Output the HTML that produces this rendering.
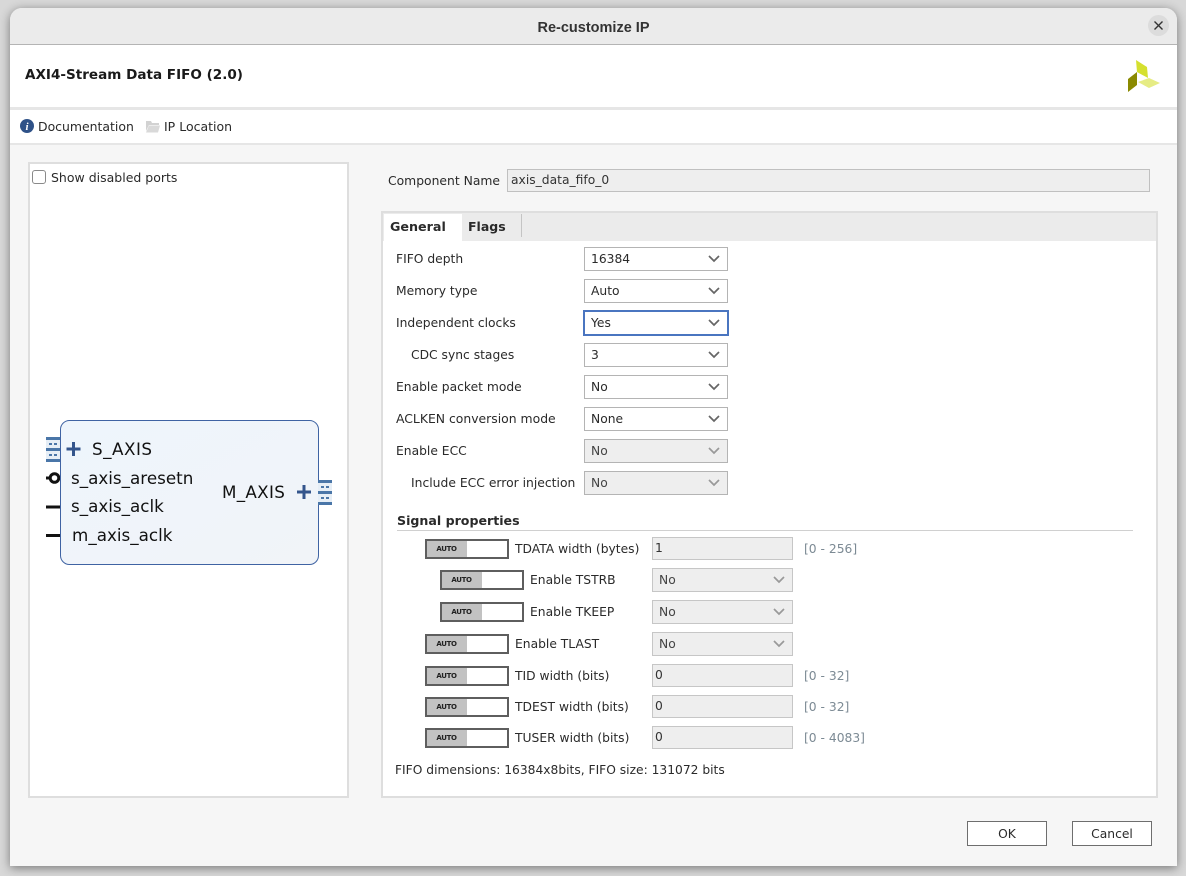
<!DOCTYPE html>
<html><head><meta charset="utf-8"><style>
html,body{margin:0;padding:0;width:1186px;height:876px;overflow:hidden;background:#fff;}
body{font-family:"DejaVu Sans",sans-serif;font-size:12.3px;color:#2a2a2a;position:relative;}
#shadow{position:absolute;left:0;top:0;width:1186px;height:876px;background:#d8d8d8;}
#win{position:absolute;left:10px;top:8px;width:1167px;height:858px;background:#f6f6f6;border-radius:12px 12px 0 0;box-shadow:0 2px 10px rgba(0,0,0,.45);overflow:hidden;}
.a{position:absolute;box-sizing:border-box;white-space:nowrap;}
.t{position:absolute;white-space:nowrap;line-height:16px;height:16px;}
.c{position:absolute;box-sizing:border-box;width:144px;height:24px;background:#fff;border:1px solid #b4b4b4;line-height:22px;padding-left:6px;}
.c.d{background:#eee;color:#444}
.c svg,.s svg{position:absolute;right:7px;top:7px}
.s{position:absolute;box-sizing:border-box;width:141px;height:24px;background:#eee;border:1px solid #c6c6c6;line-height:22px;padding-left:6px;color:#444}
.i{position:absolute;box-sizing:border-box;left:652px;width:141px;height:23px;background:#eee;border:1px solid #c6c6c6;line-height:21px;padding-left:2px;color:#333}
.au{position:absolute;box-sizing:border-box;width:84px;height:20px;background:#fff;border:2px solid #5e5e5e;}
.au b{position:absolute;left:0;top:0;width:40px;height:16px;background:#c2c2c2;font:bold 7px/16px "DejaVu Sans",sans-serif;color:#222;text-align:center;letter-spacing:-.35px;padding-right:1px;box-sizing:border-box}
.r{position:absolute;color:#7c8a94;white-space:nowrap;line-height:16px}
.p{position:absolute;white-space:nowrap;font-size:16.75px;line-height:20px;color:#111}
.btn{position:absolute;box-sizing:border-box;width:80px;height:25px;background:#fff;border:1px solid #6e6e6e;text-align:center;line-height:24px}
</style></head><body>
<div id="shadow"></div>
<div id="win"></div>
<div class="a" style="left:10px;top:8px;width:1167px;height:37px;background:#ebebeb;border-bottom:1px solid #b4b4b4;border-radius:12px 12px 0 0"></div>
<div class="t" style="left:10px;width:1167px;top:20px;text-align:center;font-family:'Liberation Sans',sans-serif;font-weight:bold;font-size:14.5px;color:#333">Re-customize IP</div>
<div class="a" style="left:1148px;top:15px;width:21px;height:21px;border-radius:50%;background:#dcdcdc"></div>
<svg class="a" style="left:1148px;top:15px" width="21" height="21"><path d="M6.500 6.500l8 8M14.500 6.500l-8 8" stroke="#333" stroke-width="1.400" fill="none"/></svg>

<div class="a" style="left:10px;top:45px;width:1167px;height:62px;background:#fff"></div>
<div class="t" style="left:25px;top:67px;font-weight:bold;font-size:13.55px;line-height:17px;color:#1a1a1a">AXI4-Stream Data FIFO (2.0)</div>
<svg class="a" style="left:1120px;top:55px" width="45" height="42"><polygon points="16,5 27,12 28,23 17,17" fill="#d5e02f"/><polygon points="17,17 8,24 8,37 17,30" fill="#8a8a00"/><polygon points="18,27 29,23 40,28 29,33" fill="#e6ec84"/></svg>

<div class="a" style="left:10px;top:107px;width:1167px;height:3px;background:#e6e6e6"></div>
<div class="a" style="left:10px;top:110px;width:1167px;height:33px;background:#fff"></div>
<div class="a" style="left:10px;top:143px;width:1167px;height:2px;background:#e6e6e6"></div>
<svg class="a" style="left:20px;top:119px" width="14" height="14"><circle cx="7" cy="7" r="7" fill="#2f5288"/><text x="7" y="11" text-anchor="middle" font-family="'Liberation Serif',serif" font-style="italic" font-weight="bold" font-size="11" fill="#fff">i</text></svg>
<div class="t" style="left:38px;top:119px;font-size:12.45px">Documentation</div>
<svg class="a" style="left:146px;top:120px" width="14" height="13"><path d="M0 1h5l1 2h7v2H3L0 11z" fill="#d2d2d2"/><path d="M3 5.500h11l-2 7H0z" fill="#d9d9d9"/></svg>
<div class="t" style="left:164px;top:119px;font-size:12.5px">IP Location</div>

<!-- left panel -->
<div class="a" style="left:28px;top:162px;width:321px;height:636px;background:#fff;border:2px solid #dedede"></div>
<div class="a" style="left:32px;top:170px;width:14px;height:14px;border:1px solid #8a8a8a;border-radius:3px;background:#fff"></div>
<div class="t" style="left:51px;top:170px;font-size:12.5px">Show disabled ports</div>

<svg class="a" style="left:40px;top:415px" width="300" height="160">
<defs><linearGradient id="g" x1="0" y1="0" x2="1" y2="1"><stop offset="0" stop-color="#eef5fc"/><stop offset="1" stop-color="#f1f4f8"/></linearGradient></defs>
<g fill="#e6eef6"><rect x="6" y="25" width="14" height="8"/><rect x="6" y="36" width="14" height="8"/></g>
<g fill="#4a76a8"><rect x="6" y="22" width="14" height="3"/><rect x="6" y="33" width="14" height="3"/><rect x="6" y="44" width="14" height="3"/>
<rect x="9" y="28" width="3" height="2"/><rect x="14" y="28" width="3" height="2"/><rect x="9" y="39" width="3" height="2"/><rect x="14" y="39" width="3" height="2"/></g>
<path d="M6 63h8" stroke="#111" stroke-width="3"/><circle cx="14.500" cy="63" r="4.300" fill="#fff" stroke="#111" stroke-width="3"/>
<path d="M6 92h14M6 120.500h14" stroke="#111" stroke-width="3" fill="none"/>
<rect x="20.500" y="5.500" width="258" height="144" rx="9" fill="url(#g)" stroke="#3f63a3" stroke-width="1"/>
<path d="M26.500 34h14M33.500 27v14" stroke="#34558c" stroke-width="3" fill="none"/>
<path d="M257 77h14M264 70v14" stroke="#34558c" stroke-width="3" fill="none"/>
<g fill="#e6eef6"><rect x="278" y="68" width="14" height="8"/><rect x="278" y="79" width="14" height="8"/></g>
<g fill="#4a76a8"><rect x="278" y="65" width="14" height="3"/><rect x="278" y="76" width="14" height="3"/><rect x="278" y="87" width="14" height="3"/>
<rect x="281" y="71" width="3" height="2"/><rect x="286" y="71" width="3" height="2"/><rect x="281" y="82" width="3" height="2"/><rect x="286" y="82" width="3" height="2"/></g>
</svg>
<div class="p" style="left:92px;top:439px;letter-spacing:.5px">S_AXIS</div>
<div class="p" style="left:71px;top:468px">s_axis_aresetn</div>
<div class="p" style="left:71px;top:496px">s_axis_aclk</div>
<div class="p" style="left:72px;top:525px">m_axis_aclk</div>
<div class="p" style="left:222px;top:482px;letter-spacing:.3px">M_AXIS</div>

<!-- component name -->
<div class="t" style="left:388px;top:173px;font-size:12.35px">Component Name</div>
<div class="a" style="left:507px;top:169px;width:643px;height:23px;background:#eee;border:1px solid #c0c0c0;line-height:21px;padding-left:3px;color:#333">axis_data_fifo_0</div>

<!-- right panel -->
<div class="a" style="left:381px;top:211px;width:777px;height:587px;background:#fff;border:2px solid #dedede"></div>
<div class="a" style="left:383px;top:213px;width:773px;height:28px;background:#ebebeb"></div>
<div class="a" style="left:384px;top:214px;width:78px;height:27px;background:#fff"></div>
<div class="a" style="left:521px;top:214px;width:1px;height:23px;background:#c4c4c4"></div>
<div class="t" style="left:390px;top:219px;font-weight:bold;font-size:12.7px">General</div>
<div class="t" style="left:468px;top:219px;font-weight:bold;font-size:12.5px">Flags</div>

<div class="t" style="left:396px;top:251px">FIFO depth</div>
<div class="c" style="left:584px;top:247px">16384<svg width="12" height="8"><path d="M1 1l5 5 5-5" fill="none" stroke="#666" stroke-width="1.700"/></svg></div>
<div class="t" style="left:396px;top:283px">Memory type</div>
<div class="c" style="left:584px;top:279px">Auto<svg width="12" height="8"><path d="M1 1l5 5 5-5" fill="none" stroke="#666" stroke-width="1.700"/></svg></div>
<div class="t" style="left:396px;top:315px">Independent clocks</div>
<div class="c" style="left:583px;top:310px;width:146px;height:26px;border:2px solid #4a75c0;padding-left:6px;line-height:22px">Yes<svg width="12" height="8"><path d="M1 1l5 5 5-5" fill="none" stroke="#666" stroke-width="1.700"/></svg></div>
<div class="t" style="left:411px;top:347px">CDC sync stages</div>
<div class="c" style="left:584px;top:343px">3<svg width="12" height="8"><path d="M1 1l5 5 5-5" fill="none" stroke="#666" stroke-width="1.700"/></svg></div>
<div class="t" style="left:396px;top:379px">Enable packet mode</div>
<div class="c" style="left:584px;top:375px">No<svg width="12" height="8"><path d="M1 1l5 5 5-5" fill="none" stroke="#666" stroke-width="1.700"/></svg></div>
<div class="t" style="left:396px;top:411px;font-size:12.4px">ACLKEN conversion mode</div>
<div class="c" style="left:584px;top:407px">None<svg width="12" height="8"><path d="M1 1l5 5 5-5" fill="none" stroke="#666" stroke-width="1.700"/></svg></div>
<div class="t" style="left:396px;top:443px">Enable ECC</div>
<div class="c d" style="left:584px;top:439px">No<svg width="12" height="8"><path d="M1 1l5 5 5-5" fill="none" stroke="#999" stroke-width="1.700"/></svg></div>
<div class="t" style="left:411px;top:475px;font-size:12.35px">Include ECC error injection</div>
<div class="c d" style="left:584px;top:471px">No<svg width="12" height="8"><path d="M1 1l5 5 5-5" fill="none" stroke="#999" stroke-width="1.700"/></svg></div>

<div class="t" style="left:397px;top:513px;font-weight:bold;font-size:12.6px">Signal properties</div>
<div class="a" style="left:397px;top:530px;width:736px;height:1px;background:#d0d0d0"></div>

<div class="au" style="left:425px;top:539px"><b>AUTO</b></div>
<div class="t" style="left:515px;top:541px">TDATA width (bytes)</div>
<div class="i" style="top:537px">1</div><div class="r" style="left:804px;top:541px">[0 - 256]</div>

<div class="au" style="left:440px;top:570px"><b>AUTO</b></div>
<div class="t" style="left:530px;top:572px">Enable TSTRB</div>
<div class="s" style="left:652px;top:568px">No<svg width="12" height="8"><path d="M1 1l5 5 5-5" fill="none" stroke="#999" stroke-width="1.700"/></svg></div>

<div class="au" style="left:440px;top:602px"><b>AUTO</b></div>
<div class="t" style="left:530px;top:604px">Enable TKEEP</div>
<div class="s" style="left:652px;top:600px">No<svg width="12" height="8"><path d="M1 1l5 5 5-5" fill="none" stroke="#999" stroke-width="1.700"/></svg></div>

<div class="au" style="left:425px;top:634px"><b>AUTO</b></div>
<div class="t" style="left:515px;top:636px">Enable TLAST</div>
<div class="s" style="left:652px;top:632px">No<svg width="12" height="8"><path d="M1 1l5 5 5-5" fill="none" stroke="#999" stroke-width="1.700"/></svg></div>

<div class="au" style="left:425px;top:666px"><b>AUTO</b></div>
<div class="t" style="left:515px;top:668px">TID width (bits)</div>
<div class="i" style="top:664px">0</div><div class="r" style="left:804px;top:668px">[0 - 32]</div>

<div class="au" style="left:425px;top:697px"><b>AUTO</b></div>
<div class="t" style="left:515px;top:699px">TDEST width (bits)</div>
<div class="i" style="top:695px">0</div><div class="r" style="left:804px;top:699px">[0 - 32]</div>

<div class="au" style="left:425px;top:728px"><b>AUTO</b></div>
<div class="t" style="left:515px;top:730px">TUSER width (bits)</div>
<div class="i" style="top:726px">0</div><div class="r" style="left:804px;top:730px">[0 - 4083]</div>

<div class="t" style="left:395px;top:762px;font-size:12.27px">FIFO dimensions: 16384x8bits, FIFO size: 131072 bits</div>

<div class="btn" style="left:967px;top:821px">OK</div>
<div class="btn" style="left:1072px;top:821px">Cancel</div>
</body></html>
